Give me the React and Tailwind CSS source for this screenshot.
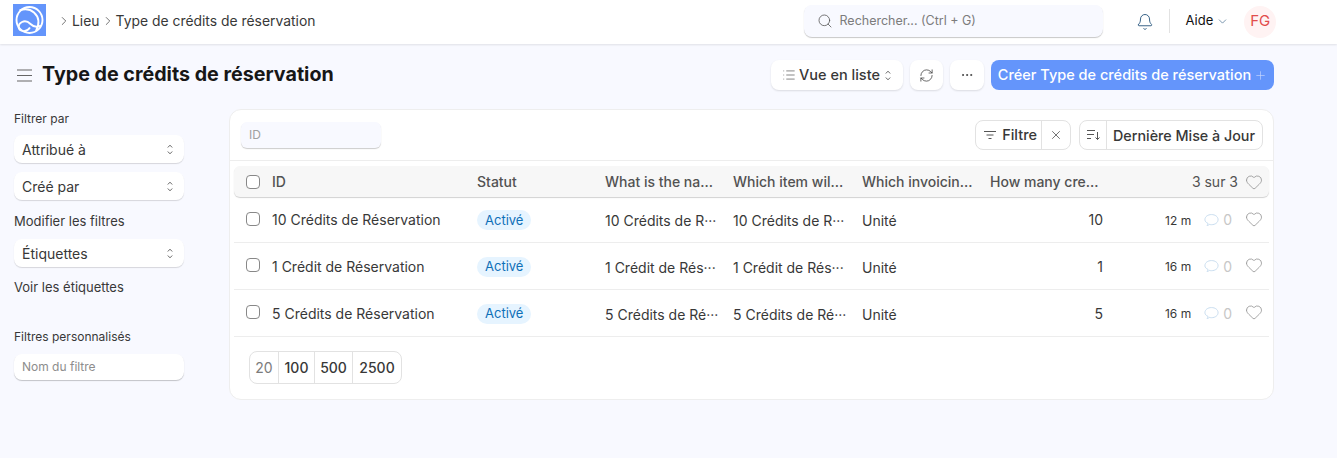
import React from "react";
import { Search, Bell, ChevronDown, ChevronRight, RefreshCw, Ellipsis, Plus, X, Heart, List } from "lucide-react";

const UpDown = ({ className = "" }) => (
  <svg width="6" height="11" viewBox="0 0 6 11" fill="none" stroke="currentColor" strokeWidth="0.9" className={className}>
    <path d="M0.8 3.5 L3 1.2 L5.2 3.5" /><path d="M0.8 7.5 L3 9.8 L5.2 7.5" />
  </svg>
);

const Select = ({ label }) => (
  <div className="flex h-7 w-[170px] items-center justify-between rounded-lg bg-white pl-2 pr-[11px] text-[14px] text-[#383838] shadow-[0_1px_1px_rgba(0,0,0,0.14)]">
    <span>{label}</span><UpDown className="text-[#555]" />
  </div>
);

const Checkbox = () => <span className="block h-[14px] w-[14px] shrink-0 rounded-[4px] border border-[#888] bg-white" />;

const Bubble = () => (
  <svg width="15" height="14" viewBox="0 0 16 14" fill="none" stroke="#c5dbee" strokeWidth="1" className="ml-[13px] shrink-0">
    <path d="M3.2 12.8 C4 12 4.4 11.3 4.3 10.6 C2.2 9.8 1 8.4 1 6.6 C1 3.5 4 1.2 8 1.2 C12 1.2 15 3.5 15 6.6 C15 9.7 12 12 8 12 C7 12 6.2 11.9 5.6 11.7 C5 12.4 4.2 12.8 3.2 12.8 Z" />
  </svg>
);

const rows = [
  ["10 Crédits de Réservation", "10 Crédits de R···", "10", "12 m"],
  ["1 Crédit de Réservation", "1 Crédit de Rés···", "1", "16 m"],
  ["5 Crédits de Réservation", "5 Crédits de Ré···", "5", "16 m"],
];

export default function App() {
  return (
    <div className="h-[458px] w-[1337px] overflow-hidden bg-[#f8f9ff] font-['Inter',sans-serif] text-[#383838]">
      <header className="flex h-11 items-center bg-white pl-[13px] shadow-[0_1px_2px_rgba(0,0,0,0.1)]">
        <svg width="33" height="32" viewBox="0 0 33 32" className="mb-[4px] shrink-0">
          <rect width="33" height="32" fill="#6495fb" />
          <g fill="none" stroke="#fff" strokeWidth="1.9">
            <circle cx="16.5" cy="16" r="13" />
            <path d="M6.5 6.5 C11 4.8 17 5 21 8.5 C25.5 12.5 27 19 23 27" />
            <path d="M28 21.5 C23 24 20 22.5 17.5 20 C15 17.5 12 16.5 9 18 C5 20 4.5 24.5 8 26.5 C11.5 28 15 26.5 17 23.5" />
          </g>
        </svg>
        <nav className="mb-[2px] ml-[11px] flex items-center text-[13.9px] text-[#383838]">
          <ChevronRight size={14} strokeWidth={1.2} className="mr-[1px]" />
          <span>Lieu</span>
          <ChevronRight size={14} strokeWidth={1.2} className="mx-[1px]" />
          <span>Type de crédits de réservation</span>
        </nav>
        <div className="mb-[2px] ml-[489px] flex h-8 w-[299px] shrink-0 items-center rounded-lg bg-[#f8f9ff] pl-[13px] text-[12.5px] text-[#7c7c7c] shadow-[0_1px_1px_rgba(0,0,0,0.22)]">
          <Search size={16} strokeWidth={1.2} className="mr-[6px] text-[#555]" />
          <span>Rechercher... (Ctrl + G)</span>
        </div>
        <Bell size={18} strokeWidth={1.2} className="mb-[1px] ml-[33px] text-[#24527a]" />
        <span className="mb-[2px] ml-[15px] h-6 w-px bg-[#e2e2e2]" />
        <span className="mb-[2px] ml-[15px] text-[13px] font-normal text-[#111]">Aide</span>
        <ChevronDown size={13} strokeWidth={1.1} className="mb-[1px] ml-[3px] text-[#24527a]" />
        <span className="mb-[1px] ml-[15px] flex h-8 w-8 items-center justify-center rounded-full bg-[#fff3f3] text-[15px] text-[#e24c4c]">FG</span>
      </header>

      <div className="flex h-[65px] items-center pb-[3px] pl-[17px] pr-[63px]">
        <svg width="15" height="13" viewBox="0 0 15 13" fill="none" stroke="#666" strokeWidth="1.1" className="shrink-0"><path d="M0 1H15M0 6.5H15M0 12H15" /></svg>
        <h1 className="ml-[10px] text-[19.7px] font-bold text-[#171717]">Type de crédits de réservation</h1>
        <div className="ml-auto flex items-center gap-[7px] text-[14.5px] font-medium">
          <div className="flex h-[30px] w-[132px] items-center justify-center gap-[3px] rounded-lg bg-white pr-[1px] shadow-[0_1px_2px_rgba(0,0,0,0.12)]">
            <List size={14} strokeWidth={1.2} className="text-[#555]" /><span>Vue en liste</span><UpDown className="ml-[2px] text-[#555]" />
          </div>
          <div className="flex h-[30px] w-[33px] items-center justify-center rounded-lg bg-white shadow-[0_1px_2px_rgba(0,0,0,0.12)]"><RefreshCw size={15} strokeWidth={1.2} /></div>
          <div className="flex h-[30px] w-[34px] items-center justify-center rounded-lg bg-white shadow-[0_1px_2px_rgba(0,0,0,0.12)]"><Ellipsis size={14} strokeWidth={1.5} /></div>
          <div className="flex h-[30px] w-[283px] items-center justify-center gap-[3px] rounded-lg bg-[#6495fb] text-white"><span>Créer Type de crédits de réservation</span><Plus size={13} strokeWidth={1.2} className="text-[#c9d9fd]" /></div>
        </div>
      </div>

      <div className="flex pl-[14px]">
        <aside className="w-[170px] shrink-0 text-[12px]">
          <div className="pt-[2px] leading-[15px]">Filtrer par</div>
          <div className="mt-[9px] flex flex-col gap-[9px]"><Select label="Attribué à" /><Select label="Créé par" /></div>
          <div className="mt-[13px] text-[13px] leading-[16px]">Modifier les filtres</div>
          <div className="mt-[10px]"><Select label="Étiquettes" /></div>
          <div className="mt-[12px] text-[13px] leading-[16px]">Voir les étiquettes</div>
          <div className="mt-[34px] leading-[15px]">Filtres personnalisés</div>
          <div className="mt-[10px] flex h-[26px] items-center rounded-lg bg-white pl-2 text-[12px] text-[#8d8d8d] shadow-[0_1px_1px_rgba(0,0,0,0.22)]">Nom du filtre</div>
        </aside>

        <main className="ml-[45px] h-[291px] w-[1045px] rounded-xl border border-[#eeeeee] bg-white">
          <div className="flex h-[51px] items-center border-b border-[#ededed] pb-[1px] pl-[11px] pr-[10px]">
            <div className="flex h-[26px] w-[140px] items-center rounded-md bg-[#f8f9ff] pl-2 text-[12px] text-[#a0a0a0] shadow-[0_1px_1px_rgba(0,0,0,0.2)]">ID</div>
            <div className="ml-auto flex h-[30px] items-center rounded-lg border border-[#e2e2e2] text-[14.5px] font-medium">
              <span className="flex h-full items-center gap-[5px] border-r border-[#e2e2e2] pl-[7px] pr-1"><svg width="14" height="10" viewBox="0 0 14 10" stroke="#555" fill="none"><path d="M1 1.5H13M3.5 5H10.5M5.5 8.5H8.5" /></svg>Filtre</span>
              <span className="flex h-full w-[28px] items-center justify-center"><X size={14} strokeWidth={1.2} /></span>
            </div>
            <div className="ml-2 flex h-[30px] items-center rounded-lg border border-[#e2e2e2] text-[14.3px] font-medium">
              <span className="flex h-full w-[27px] items-center justify-center border-r border-[#e2e2e2]"><svg width="15" height="12" viewBox="0 0 15 12" stroke="#555" fill="none"><path d="M1 1.5H9M1 5.5H8M1 9.5H5M11.5 3V10.5M9.5 8.5L11.5 10.5L13.5 8.5" /></svg></span>
              <span className="pl-[6px] pr-[7px] pt-[2px]">Dernière Mise à Jour</span>
            </div>
          </div>

          <div className="mx-[4px] mt-[5px]">
            <div className="flex h-[31px] items-center rounded-md bg-[#f7f7f7] pl-[12px] pr-[6px] text-[14px] font-medium text-[#525252] shadow-[0_1px_1px_rgba(0,0,0,0.18)]">
              <Checkbox />
              <span className="ml-[12px] w-[205px]">ID</span>
              <span className="w-[128px]">Statut</span>
              <span className="w-[128px]">What is the na...</span>
              <span className="w-[129px]">Which item wil...</span>
              <span className="w-[128px]">Which invoicin...</span>
              <span className="w-[113px] whitespace-nowrap">How many cre...</span>
              <span className="ml-auto font-normal">3 sur 3</span>
              <Heart size={18} strokeWidth={1} className="ml-[7px] text-[#8a8a8a]" />
            </div>
            {rows.map((r, i) => (
              <div key={r[0]} className={`flex items-center border-b border-[#ededed] pl-[12px] pr-[6px] text-[14px] ${i === 0 ? "h-[46px]" : "h-[47px]"}`}>
                <span className="mb-[2px]"><Checkbox /></span>
                <span className="ml-[12px] w-[205px]">{r[0]}</span>
                <span className="w-[128px]"><span className="inline-flex h-5 items-center rounded-full bg-[#e6f4ff] px-2 text-[13px] text-[#0f6fb8]">Activé</span></span>
                <span className="w-[128px] whitespace-nowrap pt-[2px]">{r[1]}</span>
                <span className="w-[129px] whitespace-nowrap pt-[2px]">{r[1]}</span>
                <span className="w-[128px] pt-[2px]">Unité</span>
                <span className="w-[113px] text-right">{r[2]}</span>
                <span className="ml-auto pt-[2px] text-[12px]">{r[3]}</span>
                <Bubble />
                <span className="ml-[4px] text-[14px] text-[#c7c7c7]">0</span>
                <Heart size={18} strokeWidth={1} className="mb-[2px] ml-[13px] text-[#8a8a8a]" />
              </div>
            ))}
          </div>

          <div className="ml-[19px] mt-[14px] flex h-[33px] w-fit items-center rounded-lg border border-[#e2e2e2] text-[14px] font-medium">
            <span className="flex h-full w-[29px] items-center justify-center border-r border-[#e2e2e2] font-normal text-[#7c7c7c]">20</span>
            <span className="flex h-full w-9 items-center justify-center border-r border-[#e2e2e2]">100</span>
            <span className="flex h-full w-[38px] items-center justify-center border-r border-[#e2e2e2]">500</span>
            <span className="flex h-full w-[48px] items-center justify-center">2500</span>
          </div>
        </main>
      </div>
    </div>
  );
}
